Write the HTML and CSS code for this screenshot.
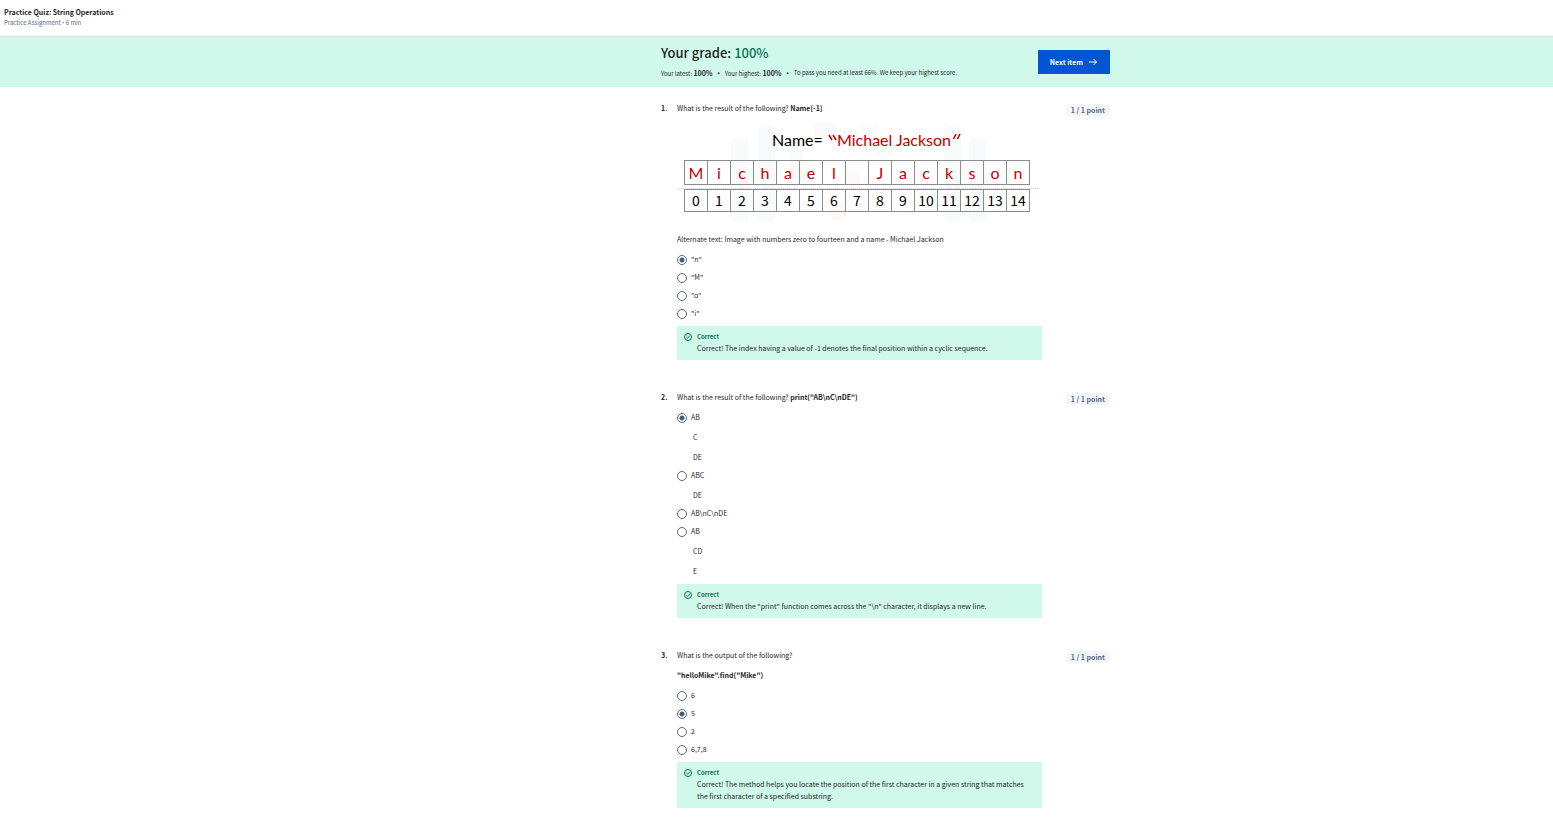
FILE: index.html
```
<!DOCTYPE html>
<html lang="en">
<head>
<meta charset="utf-8">
<title>Practice Quiz: String Operations</title>
<link rel="stylesheet" href="styles.css">
</head>
<body>
<svg class="defs" aria-hidden="true">
  <symbol id="check" viewBox="0 0 16 16"><circle cx="8" cy="8" r="7" fill="none" stroke="currentColor" stroke-width="2"/><path d="M4.8 8.2 7 10.4 11.4 5.8" fill="none" stroke="currentColor" stroke-width="2"/></symbol>
</svg>
<header class="topbar">
  <h1 class="topbar-title">Practice Quiz: String Operations</h1>
  <p class="topbar-meta">Practice Assignment <span class="dot">•</span> 6 min</p>
</header>
<section class="grade-band">
  <div class="column grade">
    <div>
      <h2 class="grade-title">Your grade: <span class="grade-value">100%</span></h2>
      <p class="grade-meta"><span>Your latest: <b>100%</b></span><b class="dot">•</b><span>Your highest: <b>100%</b></span><b class="dot">•</b><span>To pass you need at least 66%. We keep your highest score.</span></p>
    </div>
    <button class="next" type="button">Next item
      <svg class="next-arrow" viewBox="0 0 20 20" aria-hidden="true"><path d="M2 10h15M11 4l6 6-6 6" fill="none" stroke="currentColor" stroke-width="2"/></svg>
    </button>
  </div>
</section>
<main class="questions">
 <div class="column">
  <section class="question">
    <span class="number">1.</span>
    <div class="body">
      <p>What is the result of the following? <b>Name[-1]</b></p>
      <svg class="figure" viewBox="0 0 365 103" role="img" aria-label="Numbers zero to fourteen and the name Michael Jackson">
        <g fill="#f9fafb">
          <rect x="54" y="16" width="17" height="84" rx="4"/><rect x="81" y="4" width="17" height="96" rx="4"/>
          <rect x="267" y="5" width="17" height="95" rx="4"/><rect x="292" y="16" width="17" height="84" rx="4"/>
        </g>
        <g fill="#fef9f9"><rect x="137" y="1" width="22" height="14" rx="3"/><rect x="112" y="40" width="20" height="16" rx="3"/><rect x="167" y="48" width="16" height="18" rx="3"/><rect x="154" y="84" width="15" height="14" rx="3"/></g>
        <g fill="#f8fcfa"><rect x="184" y="1" width="18" height="12" rx="3"/><circle cx="120" cy="34" r="7"/><circle cx="207" cy="32" r="7"/><rect x="222" y="77" width="14" height="14" rx="3"/></g>
        <path d="M0 66.500H364" stroke="#dcdcdc" stroke-dasharray="1 1"/>
        <path class="grid" d="M7 38.500H353M7 62.500H353M7 67.500H353M7 89.500H353"/>
        <path class="grid" d="M7.500 38V63M30.500 38V63M53.500 38V63M76.500 38V63M99.500 38V63M122.500 38V63M145.500 38V63M168.500 38V63M191.500 38V63M214.500 38V63M237.500 38V63M260.500 38V63M283.500 38V63M306.500 38V63M329.500 38V63M352.500 38V63M7.500 67V90M30.500 67V90M53.500 67V90M76.500 67V90M99.500 67V90M122.500 67V90M145.500 67V90M168.500 67V90M191.500 67V90M214.500 67V90M237.500 67V90M260.500 67V90M283.500 67V90M306.500 67V90M329.500 67V90M352.500 67V90"/>
        <text class="fig-name" x="95" y="24">Name=</text>
        <text class="fig-name red" x="160" y="24">Michael Jackson</text>
        <path d="M152 13 155 18M156 13 159 18M279 12 276.500 17M283 12 280.500 17" stroke="#c00000" stroke-width="1.500"/>
        <g class="fig-cell red">
          <text x="19" y="57">M</text><text x="42" y="57">i</text><text x="65" y="57">c</text><text x="88" y="57">h</text><text x="111" y="57">a</text><text x="134" y="57">e</text><text x="157" y="57">l</text><text x="203" y="57">J</text><text x="226" y="57">a</text><text x="249" y="57">c</text><text x="272" y="57">k</text><text x="295" y="57">s</text><text x="318" y="57">o</text><text x="341" y="57">n</text>
        </g>
        <g class="fig-cell digits">
          <text x="19" y="84">0</text><text x="42" y="84">1</text><text x="65" y="84">2</text><text x="88" y="84">3</text><text x="111" y="84">4</text><text x="134" y="84">5</text><text x="157" y="84">6</text><text x="180" y="84">7</text><text x="203" y="84">8</text><text x="226" y="84">9</text><text x="249" y="84">10</text><text x="272" y="84">11</text><text x="295" y="84">12</text><text x="318" y="84">13</text><text x="341" y="84">14</text>
        </g>
      </svg>
      <p>Alternate text: Image with numbers zero to fourteen and a name - Michael Jackson</p>
      <div class="options">
        <label class="option"><input type="radio" name="q1" checked>"n"</label>
        <label class="option"><input type="radio" name="q1">"M"</label>
        <label class="option"><input type="radio" name="q1">"o"</label>
        <label class="option"><input type="radio" name="q1">"i"</label>
      </div>
      <div class="feedback">
        <svg class="check"><use href="#check"/></svg>
        <div><h3 class="feedback-title">Correct</h3><p>Correct! The index having a value of -1 denotes the final position within a cyclic sequence.</p></div>
      </div>
    </div>
    <span class="points">1 / 1 point</span>
  </section>
  <section class="question">
    <span class="number">2.</span>
    <div class="body">
      <p>What is the result of the following? <b>print("AB\nC\nDE")</b></p>
      <div class="options">
        <label class="option"><input type="radio" name="q2" checked>AB<span class="line">C</span><span class="line">DE</span></label>
        <label class="option"><input type="radio" name="q2">ABC<span class="line">DE</span></label>
        <label class="option"><input type="radio" name="q2">AB\nC\nDE</label>
        <label class="option"><input type="radio" name="q2">AB<span class="line">CD</span><span class="line">E</span></label>
      </div>
      <div class="feedback">
        <svg class="check"><use href="#check"/></svg>
        <div><h3 class="feedback-title">Correct</h3><p>Correct! When the "print" function comes across the "\n" character, it displays a new line.</p></div>
      </div>
    </div>
    <span class="points">1 / 1 point</span>
  </section>
  <section class="question">
    <span class="number">3.</span>
    <div class="body">
      <p>What is the output of the following?</p>
      <p class="code"><b>"helloMike".find("Mike")</b></p>
      <div class="options">
        <label class="option"><input type="radio" name="q3">6</label>
        <label class="option"><input type="radio" name="q3" checked>5</label>
        <label class="option"><input type="radio" name="q3">2</label>
        <label class="option"><input type="radio" name="q3">6,7,8</label>
      </div>
      <div class="feedback">
        <svg class="check"><use href="#check"/></svg>
        <div><h3 class="feedback-title">Correct</h3><p>Correct! The method helps you locate the position of the first character in a given string that matches the first character of a specified substring.</p></div>
      </div>
    </div>
    <span class="points">1 / 1 point</span>
  </section>
 </div>
</main>
</body>
</html>
```
FILE: styles.css
```
* { box-sizing: border-box; }
body, h1, h2, h3, p { margin: 0; }
body {
  font-family: "Noto Sans CJK SC", "Open Sans", sans-serif;
  font-size: 7px;
  line-height: 12px;
  color: #1f1f1f;
  background: #fff;
}
.defs { display: none; }
.dot { font-family: "Open Sans", sans-serif; }
.topbar { padding: 7px 4px 8px; border-bottom: 1px solid #dae1ed; }
.topbar-title { font-size: 7px; line-height: 11px; font-weight: 700; }
.topbar-meta { font-size: 6px; line-height: 10px; color: #5b6780; }
.grade-band { padding-left: 218px; background: #d0f9ec; }
.column { width: 100%; max-width: 449px; margin: 0 auto; }
.grade { display: flex; align-items: center; justify-content: space-between; padding: 6px 0 7px; }
.grade-title { font-size: 13px; line-height: 20px; font-weight: 500; }
.grade-value { color: #087051; }
.grade-meta { display: flex; gap: 5px; padding-top: 4px; font-size: 6px; }
.grade-meta span b { font-size: 7px; }
.next {
  display: flex; align-items: center; justify-content: center; gap: 5px;
  height: 24px; padding: 0 12px; border: 0; border-radius: 1px;
  background: #0056d2; color: #fff; font: 700 7px/12px "Noto Sans CJK SC", sans-serif;
}
.next-arrow { width: 10px; height: 10px; }
.questions { padding: 15px 0 27px 218px; }
.question { display: flex; align-items: flex-start; }
.question + .question { margin-top: 31px; }
.number { flex: none; width: 16px; font-weight: 700; }
.body { flex: 1; max-width: 365px; }
.points {
  margin: 2px 0 0 auto; padding: 0 5px; border-radius: 6px;
  background: #f2f5fa; color: #5b6780; font-weight: 700;
}
.figure { display: block; width: 100%; margin: 8px 0; }
.figure .grid { fill: none; stroke: #8c8c8c; }
.fig-name { font: 16px Lato, sans-serif; }
.fig-cell { font: 16px Lato, sans-serif; text-anchor: middle; }
.digits { font: 14px "Noto Sans CJK SC", sans-serif; }
.red { fill: #c00000; }
.code { margin-top: 8px; }
.options { margin-top: 6px; }
.option {
  display: grid; grid-template-columns: 10px 1fr; grid-template-rows: 16px; grid-auto-rows: 20px;
  column-gap: 4px; padding-top: 2px;
}
.option input {
  appearance: none; width: 10px; height: 10px; margin: 2px 0 0;
  border: 1px solid #5b6780; border-radius: 50%; background: #fff;
}
.option input:checked { background: radial-gradient(circle, #48597f 0 2px, #fff 3px); }
.line { grid-column: 2; padding: 4px 0 0 2px; }
.feedback { display: flex; gap: 5px; margin-top: 3px; padding: 5px 7px 6px; background: #d0f9ec; }
.feedback-title { font-size: 6px; line-height: 11px; font-weight: 700; color: #087051; }
.check { flex: none; width: 8px; height: 8px; margin-top: 2px; color: #087051; }
```
